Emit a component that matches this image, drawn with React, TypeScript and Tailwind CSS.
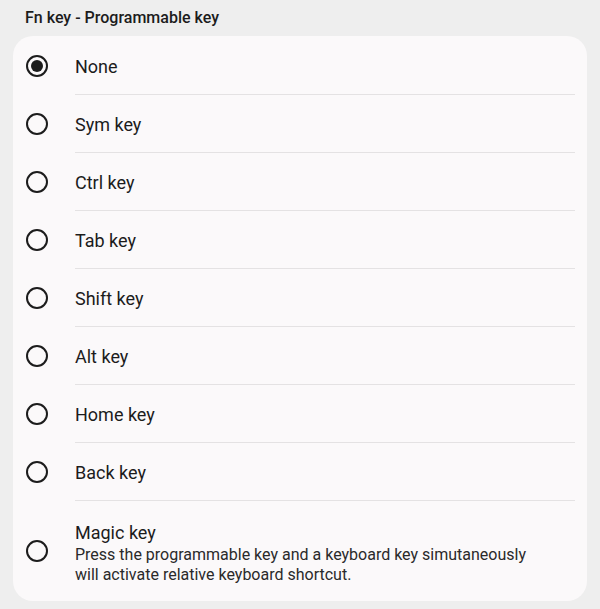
const options = ["None", "Sym key", "Ctrl key", "Tab key", "Shift key", "Alt key", "Home key", "Back key"];

function Radio({ checked }: { checked: boolean }) {
  return (
    <div className="w-[22px] h-[22px] rounded-full border-2 border-[#1c1c1c] flex items-center justify-center shrink-0">
      {checked && <div className="w-[12px] h-[12px] rounded-full bg-[#1c1c1c]" />}
    </div>
  );
}

export default function App() {
  const selected = "None";
  return (
    <div className="w-[600px] h-[609px] bg-[#eeeeee] text-[#1c1c1c] font-['Roboto',sans-serif] overflow-hidden">
      <div className="h-[36px] pl-[25px] pt-[7px] text-[16px] font-medium leading-[22px]">Fn key - Programmable key</div>
      <div className="mx-[13px] bg-[#fbf9fa] rounded-[20px] pt-px">
        {options.map((opt) => (
          <div key={opt} className="flex items-center h-[58px]">
            <div className="w-[62px] pl-[13px] flex shrink-0">
              <Radio checked={opt === selected} />
            </div>
            <div className="flex-1 h-full mr-[12px] border-b border-[#e4e2e3] flex items-center text-[18px] pt-px">
              {opt}
            </div>
          </div>
        ))}
        <div className="flex items-center h-[100px]">
          <div className="w-[62px] pl-[13px] flex shrink-0">
            <Radio checked={false} />
          </div>
          <div className="flex-1 flex flex-col pt-[3px]">
            <div className="text-[18px] leading-[24px]">Magic key</div>
            <div className="text-[16px] leading-[20px] text-[#2a2a2a]">
              Press the programmable key and a keyboard key simutaneously
              <br />
              will activate relative keyboard shortcut.
            </div>
          </div>
        </div>
      </div>
    </div>
  );
}
